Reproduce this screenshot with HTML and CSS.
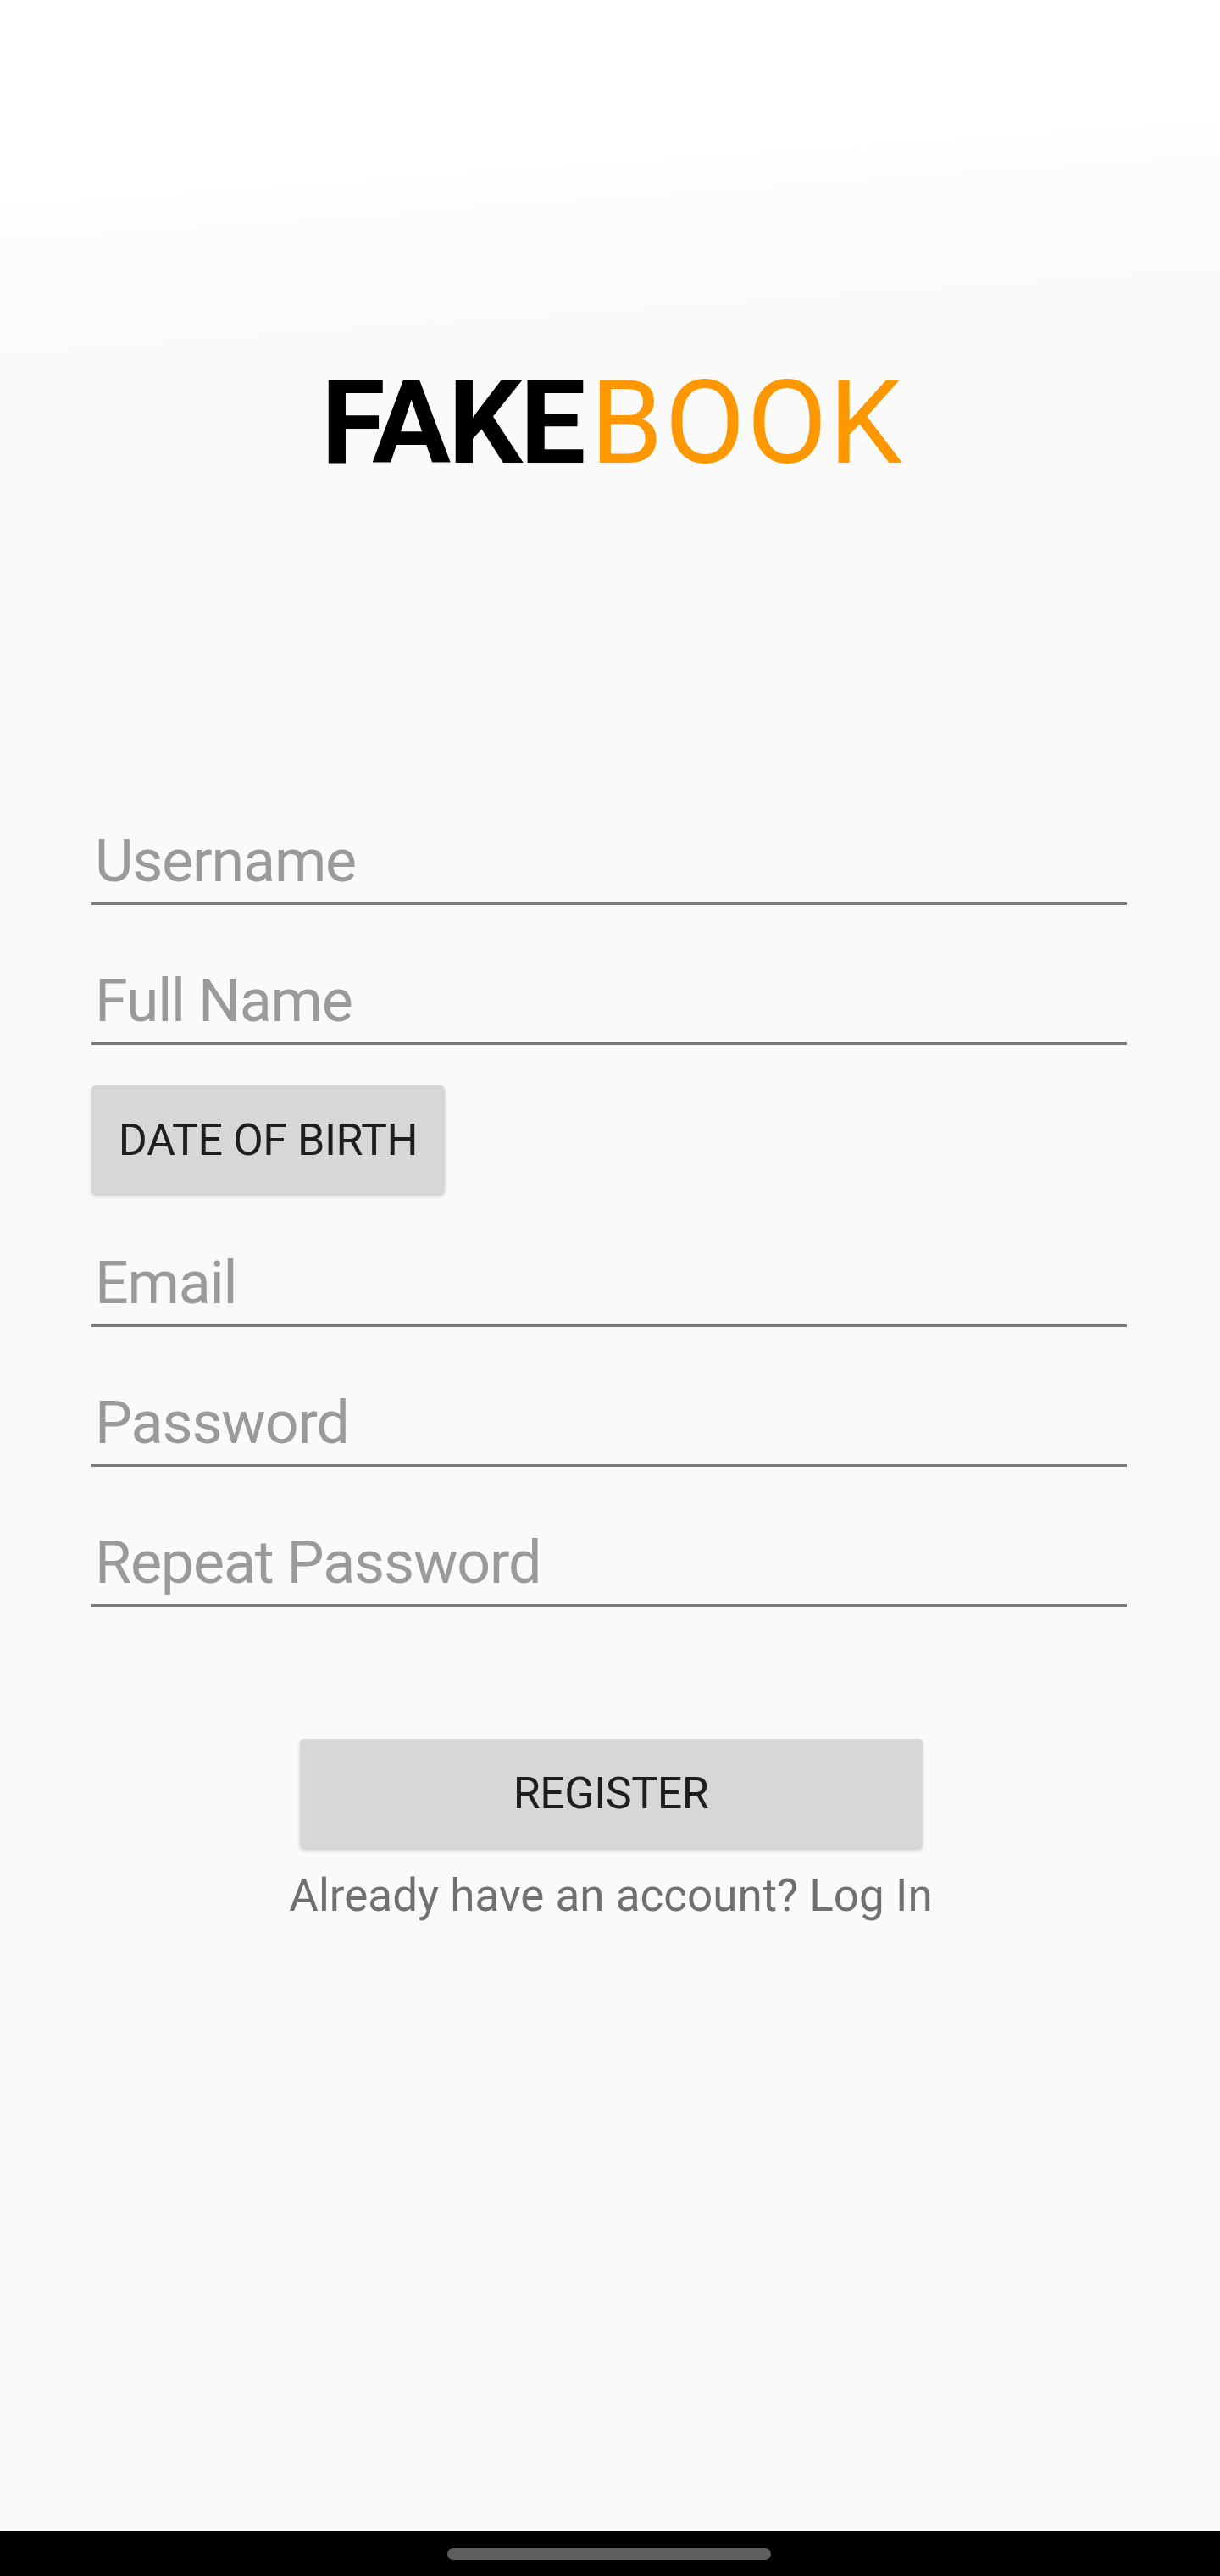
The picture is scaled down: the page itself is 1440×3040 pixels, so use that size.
FILE: index.html
```html
<!DOCTYPE html>
<html lang="en">
<head>
<meta charset="utf-8">
<title>Fakebook - Register</title>
<link rel="stylesheet" href="styles.css">
</head>
<body>
<div class="screen">
  <header class="brand">
    <h1 class="logo"><span class="logo-fake">FAKE</span><span class="logo-book">BOOK</span></h1>
  </header>
  <main class="form">
    <div class="field field-first"><span class="placeholder">Username</span></div>
    <div class="field"><span class="placeholder">Full Name</span></div>
    <button class="btn btn-dob" type="button">DATE OF BIRTH</button>
    <div class="field field-after-btn"><span class="placeholder">Email</span></div>
    <div class="field"><span class="placeholder">Password</span></div>
    <div class="field"><span class="placeholder">Repeat Password</span></div>
    <div class="actions">
      <button class="btn btn-register" type="button">REGISTER</button>
      <p class="login-link">Already have an account? Log In</p>
    </div>
  </main>
  <div class="spacer"></div>
  <nav class="navbar"><span class="pill"></span></nav>
</div>
</body>
</html>
```

FILE: styles.css
```css
* { box-sizing: border-box; }

html, body {
  margin: 0;
  padding: 0;
  background: #fafafa;
}

body {
  font-family: Roboto, "Noto Sans", "Liberation Sans", sans-serif;
}

.screen {
  width: 1440px;
  height: 3040px;
  display: flex;
  flex-direction: column;
  background:
    linear-gradient(176deg, #ffffff 0px, #ffffff 230px, #fcfcfc 300px, #fafafa 420px, #fafafa 100%);
  overflow: hidden;
}

.brand {
  padding-top: 430px;
  display: flex;
  justify-content: center;
}

.logo {
  margin: 0;
  font-size: 138px;
  line-height: 138px;
  font-weight: 400;
  white-space: nowrap;
  margin-left: 6px;
}

.logo-fake {
  font-weight: 700;
  color: #000;
  letter-spacing: -3px;
  margin-right: 8px;
}

.logo-book {
  color: #ff9800;
  letter-spacing: 2px;
}

.form {
  padding: 0 110px 0 108px;
  display: flex;
  flex-direction: column;
}

.field {
  margin-top: 78px;
  padding: 0 0 14px 4px;
  border-bottom: 3px solid #7b7b7b;
  font-size: 70px;
  line-height: 70px;
  color: #9a9a9a;
  letter-spacing: -1.2px;
}

.field-first {
  margin-top: 413px;
}

.field-after-btn {
  margin-top: 70px;
}

.placeholder {
  white-space: nowrap;
}

.btn {
  border: none;
  border-radius: 5px;
  background: #d6d7d7;
  color: #1e1e1e;
  font-family: Roboto, "Noto Sans", "Liberation Sans", sans-serif;
  font-size: 52px;
  letter-spacing: -0.5px;
  padding: 0;
  display: flex;
  align-items: center;
  justify-content: center;
  box-shadow: 0 3px 5px rgba(0,0,0,0.14), 0 1px 2px rgba(0,0,0,0.08);
}

.btn-dob {
  margin-top: 48px;
  width: 417px;
  height: 128px;
  align-self: flex-start;
}

.actions {
  display: flex;
  flex-direction: column;
  align-items: center;
  margin-top: 156px;
}

.btn-register {
  width: 735px;
  height: 129px;
  margin-left: 4px;
}

.login-link {
  margin: 26px 0 0 4px;
  font-size: 53px;
  line-height: 60px;
  color: #707070;
  letter-spacing: 0;
}

.spacer {
  flex: 1;
}

.navbar {
  height: 53px;
  background: #000;
  display: flex;
  justify-content: center;
  padding-top: 20px;
}

.pill {
  width: 382px;
  height: 14px;
  border-radius: 7px;
  background: #5e5e5e;
  margin-left: -2px;
}
```
